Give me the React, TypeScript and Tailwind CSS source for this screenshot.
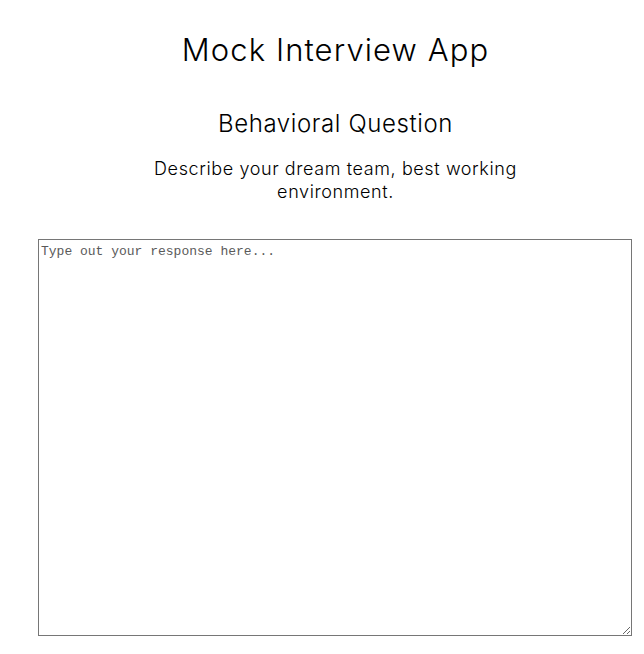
export default function App() {
    return (
        <div className="min-h-screen bg-white pl-[27px] text-black font-['Inter',sans-serif] font-light">
            <h1 className="pt-[30px] text-center text-[31px] leading-[40px] tracking-[1.1px]">Mock Interview App</h1>
            <h2 className="mt-[38px] text-center text-[24px] leading-[32px] tracking-[0.6px]">Behavioral Question</h2>
            <p className="mx-auto mt-[17px] w-[400px] text-center text-[18px] leading-[23px] tracking-[0.6px]">
                Describe your dream team, best working environment.
            </p>
            <textarea
                className="mt-[36px] ml-[11px] block h-[397px] w-[594px] border border-[#767676] p-[2px] font-['Liberation_Mono',monospace] text-[13px] font-normal placeholder:text-[#5a5a5a]"
                placeholder="Type out your response here..."
            />
        </div>
    )
}
